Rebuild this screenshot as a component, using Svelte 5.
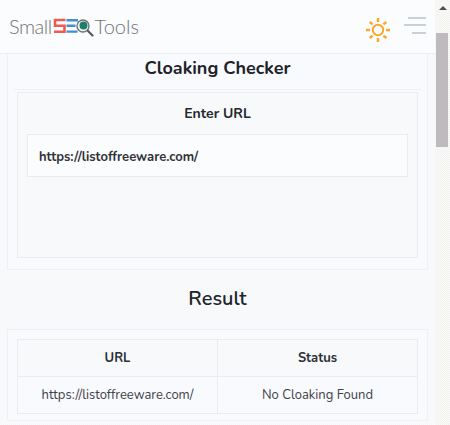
<script>
  const rows = [{ url: "https://listoffreeware.com/", status: "No Cloaking Found" }];
</script>

<div class="page">
  <header class="topbar">
    <div class="logo">
      <span class="small">Small</span>
      <svg class="seo" width="42" height="24" viewBox="0 0 42 24" aria-hidden="true">
        <path d="M12.500 2H2v5.800h9.500v5.900H1" fill="none" stroke="#ef5b4c" stroke-width="2.600" />
        <path d="M13.500 2.200h11.500M13.500 7.800h9M13.500 13.600h11" fill="none" stroke="#3f8fd2" stroke-width="2.400" />
        <circle cx="30" cy="8" r="6" fill="#f6f8f8" stroke="#6f7375" stroke-width="1.400" />
        <circle cx="30.500" cy="7.500" r="4" fill="#1c7f6b" />
        <path d="M35 13l4.500 4.500" stroke="#55595c" stroke-width="2.200" stroke-linecap="round" />
      </svg>
      <span>Tools</span>
    </div>
    <svg class="sun" width="26" height="26" viewBox="0 0 26 26" aria-hidden="true">
      <circle cx="13" cy="13" r="5.200" fill="none" stroke="#fba82c" stroke-width="2" />
      <path d="M13 1v4M13 21v4M1 13h4M21 13h4M4.600 5l3 2.300M21.400 5l-3 2.300M4.600 21l3-2.300M21.400 21l-3-2.300" stroke="#fba82c" stroke-width="2.400" />
    </svg>
    <div class="burger"><i class="a"></i><i class="b"></i><i class="c"></i></div>
  </header>

  <main class="content">
    <section class="card first">
      <h1>Cloaking Checker</h1>
      <div class="box">
        <h2>Enter URL</h2>
        <div class="field">https://listoffreeware.com/</div>
      </div>
    </section>

    <h3>Result</h3>

    <section class="card results">
      <table>
        <thead>
          <tr><th>URL</th><th>Status</th></tr>
        </thead>
        <tbody>
          {#each rows as row}
            <tr><td>{row.url}</td><td>{row.status}</td></tr>
          {/each}
        </tbody>
      </table>
    </section>
  </main>

  <div class="scrollbar">
    <div class="arrow"></div>
    <div class="thumb"></div>
  </div>
</div>

<style>
  :global(body) {
    margin: 0;
    background: #fafbfd;
  }
  .page {
    --dots: conic-gradient(#f5f6f8 25%, #fbfcfd 0 50%, #f5f6f8 0 75%, #fbfcfd 0);
    position: relative;
    width: 450px;
    height: 425px;
    overflow: hidden;
    font-family: "Nunito", "Noto Sans", sans-serif;
    background-image: var(--dots);
    background-size: 2px 2px;
  }
  .topbar {
    display: flex;
    align-items: center;
    width: 435px;
    height: 54px;
    box-sizing: border-box;
    padding: 0 9px;
    background: #fbfcfe;
    border-bottom: 1px solid #eceef1;
  }
  .logo {
    display: flex;
    align-items: center;
    font-family: "Lato", sans-serif;
    font-weight: 300;
    font-size: 20px;
    color: #6f7275;
    flex: 1;
    margin-top: -2px;
  }
  .small {
    letter-spacing: -0.5px;
  }
  .seo {
    margin: 0 0 0 1px;
    transform: translateY(4px);
  }
  .sun {
    margin: 7px 13px 0 0;
  }
  .burger {
    display: flex;
    flex-direction: column;
    align-items: flex-end;
    gap: 5.500px;
    width: 22px;
    margin-bottom: 3px;
  }
  .burger i {
    display: block;
    height: 2px;
    background: #c9d0d7;
  }
  .a { width: 18px; }
  .b { width: 22px; }
  .c { width: 14px; }
  .content {
    width: 421px;
    margin-left: 7px;
  }
  .card {
    box-sizing: border-box;
    background: #f9fafd;
    border: 1px solid #eef0f3;
  }
  .first {
    border-top: 0;
    height: 216px;
    padding: 0 6px;
  }
  h1 {
    margin: 0;
    height: 36px;
    line-height: 27px;
    padding-top: 1px;
    box-sizing: border-box;
    font-size: 18px;
    font-weight: 700;
    text-align: center;
    color: #1e2229;
    border-bottom: 1px solid #eef0f3;
  }
  .box {
    box-sizing: border-box;
    height: 166px;
    margin: 2px 3px 0;
    padding: 10px 9px 0;
    border: 1px solid #eaecef;
    background-image: var(--dots);
    background-size: 2px 2px;
  }
  h2 {
    margin: 0 0 9px;
    font-size: 14px;
    line-height: 22px;
    font-weight: 700;
    text-align: center;
    color: #23272e;
  }
  .field {
    height: 43px;
    box-sizing: border-box;
    padding: 1px 11px 0;
    line-height: 43px;
    font-size: 13px;
    font-weight: 700;
    color: #2f3338;
    background: #fbfcfe;
    border: 1px solid #eaecef;
  }
  h3 {
    margin: 0;
    height: 59px;
    line-height: 58px;
    font-size: 20px;
    font-weight: 650;
    text-align: center;
    color: #20242a;
  }
  .results {
    height: 92px;
    padding: 9px;
  }
  table {
    width: 100%;
    border-collapse: collapse;
    table-layout: fixed;
    font-size: 13px;
  }
  th, td {
    padding: 0;
    text-align: center;
    border: 1px solid #eaecef;
    color: #3d4148;
  }
  th {
    height: 36px;
    font-weight: 700;
    color: #2b2f36;
    background-image: var(--dots);
    background-size: 2px 2px;
  }
  td {
    height: 36px;
  }
  .scrollbar {
    position: absolute;
    top: 0;
    right: 0;
    width: 15px;
    height: 425px;
    background-image: conic-gradient(#f5f3f0 25%, #fbfafa 0 50%, #f5f3f0 0 75%, #fbfafa 0);
    background-size: 2px 2px;
  }
  .arrow {
    width: 0;
    margin: 6px auto 0;
    border: 4px solid transparent;
    border-top: 0;
    border-bottom: 4px solid #505050;
  }
  .thumb {
    position: absolute;
    top: 33px;
    left: 1px;
    width: 12px;
    height: 114px;
    background: #bdbbbe;
  }
</style>
